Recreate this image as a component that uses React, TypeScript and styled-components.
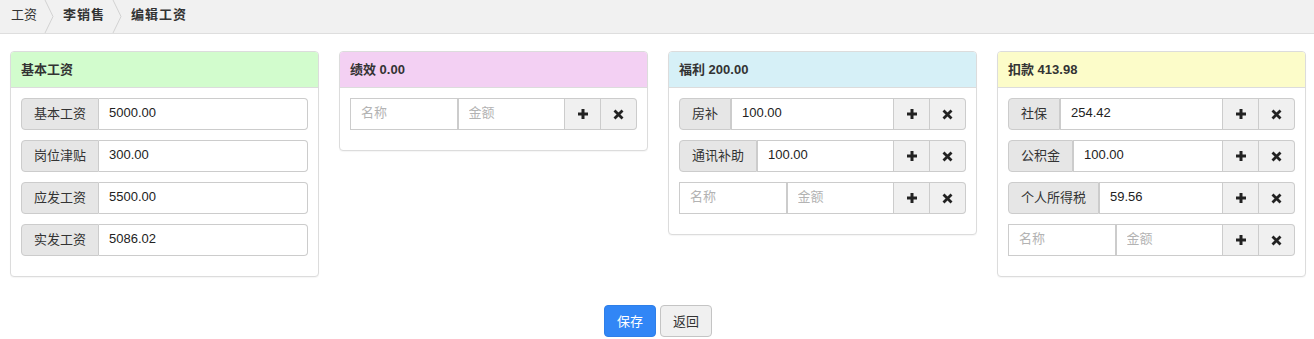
import React from "react";
import styled, { createGlobalStyle } from "styled-components";

const Global = createGlobalStyle`
  html, body { margin: 0; padding: 0; background: #fff; }
  body {
    font-family: "Liberation Sans", Arial, "Noto Sans CJK SC", sans-serif;
    font-size: 13px;
    color: #333;
  }
  * { box-sizing: border-box; }
`;

const Crumbs = styled.nav`
  display: flex;
  align-items: stretch;
  height: 34px;
  background: #f1f1f1;
  border-bottom: 1px solid #dedede;
  padding-left: 11px;
`;

const Crumb = styled.span<{ $bold?: boolean }>`
  display: flex;
  align-items: center;
  font-weight: ${(p) => (p.$bold ? "bold" : "normal")};
  letter-spacing: ${(p) => (p.$bold ? "1px" : "0")};
  color: #333;
  line-height: 18px;
  padding-bottom: 3px;
`;

const Sep = styled.svg`
  display: block;
  width: 10px;
  height: 33px;
  margin: 0 9px 0 7px;
`;

const Chevron = () => (
  <Sep viewBox="0 0 10 33">
    <polyline points="1,0 9,16.5 1,33" fill="none" stroke="#d2d2d2" strokeWidth="1" />
  </Sep>
);

const Grid = styled.div`
  display: grid;
  grid-template-columns: repeat(4, minmax(0, 1fr));
  column-gap: 20px;
  align-items: start;
  padding: 0 8px 0 10px;
  margin-top: 17px;
`;

const Panel = styled.section`
  border: 1px solid #dcdcdc;
  border-radius: 4px;
  background: #fff;
  box-shadow: 0 1px 1px rgba(0, 0, 0, 0.04);
  min-width: 0;
`;

const Heading = styled.div<{ $bg: string }>`
  background: ${(p) => p.$bg};
  border-bottom: 1px solid #dcdcdc;
  border-radius: 3px 3px 0 0;
  height: 36px;
  padding: 0 10px 2px;
  display: flex;
  align-items: center;
  font-weight: bold;
  font-size: 13px;
  color: #333;
`;

const Body = styled.div`
  padding: 10px 10px 10px;
  display: flex;
  flex-direction: column;
`;

const Group = styled.div`
  display: flex;
  height: 32px;
  margin-bottom: 10px;
`;

const Addon = styled.span`
  display: flex;
  align-items: center;
  padding: 0 12px 3px;
  background: #e6e6e6;
  border: 1px solid #ccc;
  border-radius: 4px 0 0 4px;
  color: #333;
  white-space: nowrap;
`;

const Field = styled.input<{ $last?: boolean }>`
  flex: 1 1 0;
  width: 0;
  min-width: 0;
  height: 32px;
  padding: 0 10px 3px;
  font: inherit;
  font-size: 13px;
  color: #222;
  border: 1px solid #ccc;
  border-left-width: ${(p) => (p.$last ? "0" : "1px")};
  border-radius: ${(p) => (p.$last ? "0 4px 4px 0" : "0")};
  outline: none;
  background: #fff;
  &::placeholder { color: #b3b3b3; }
`;

const IconBtn = styled.button<{ $end?: boolean }>`
  width: 36px;
  flex: none;
  display: flex;
  align-items: center;
  justify-content: center;
  padding: 0;
  background: #f0f0f0;
  border: 1px solid #ccc;
  border-left-width: 0;
  border-radius: ${(p) => (p.$end ? "0 4px 4px 0" : "0")};
  cursor: pointer;
`;

const PlusIcon = () => (
  <svg width="12" height="12" viewBox="0 0 12 12">
    <path d="M6 1v10M1 6h10" stroke="#222" strokeWidth="3" />
  </svg>
);

const XIcon = () => (
  <svg width="11" height="11" viewBox="0 0 11 11">
    <path d="M1.5 1.5l8 8M9.5 1.5l-8 8" stroke="#222" strokeWidth="2.8" />
  </svg>
);

const Footer = styled.div`
  display: flex;
  justify-content: center;
  gap: 4px;
  margin-top: 28px;
  padding-left: 2px;
`;

const Btn = styled.button<{ $primary?: boolean }>`
  height: 32px;
  padding: 0 12px 2px;
  font: inherit;
  font-size: 13px;
  border-radius: 4px;
  border: 1px solid ${(p) => (p.$primary ? "#2e7fe8" : "#c4c4c4")};
  background: ${(p) => (p.$primary ? "#3186f6" : "#f0f0f0")};
  color: ${(p) => (p.$primary ? "#fff" : "#333")};
  cursor: pointer;
`;

type Item = { name: string; value: string };

const Actions = () => (
  <>
    <IconBtn><PlusIcon /></IconBtn>
    <IconBtn $end><XIcon /></IconBtn>
  </>
);

const ItemRow = ({ item, editable }: { item: Item; editable: boolean }) => (
  <Group>
    <Addon>{item.name}</Addon>
    {editable ? (
      <>
        <Field defaultValue={item.value} />
        <Actions />
      </>
    ) : (
      <Field $last defaultValue={item.value} />
    )}
  </Group>
);

const NewRow = () => (
  <Group>
    <Field placeholder="名称" />
    <Field placeholder="金额" />
    <Actions />
  </Group>
);

const panels: { title: string; bg: string; items: Item[]; editable: boolean }[] = [
  {
    title: "基本工资",
    bg: "#d2fccd",
    editable: false,
    items: [
      { name: "基本工资", value: "5000.00" },
      { name: "岗位津贴", value: "300.00" },
      { name: "应发工资", value: "5500.00" },
      { name: "实发工资", value: "5086.02" },
    ],
  },
  { title: "绩效 0.00", bg: "#f3d0f3", editable: true, items: [] },
  {
    title: "福利 200.00",
    bg: "#d6f0f7",
    editable: true,
    items: [
      { name: "房补", value: "100.00" },
      { name: "通讯补助", value: "100.00" },
    ],
  },
  {
    title: "扣款 413.98",
    bg: "#fcfcc9",
    editable: true,
    items: [
      { name: "社保", value: "254.42" },
      { name: "公积金", value: "100.00" },
      { name: "个人所得税", value: "59.56" },
    ],
  },
];

export default function App() {
  return (
    <>
      <Global />
      <Crumbs>
        <Crumb>工资</Crumb>
        <Chevron />
        <Crumb $bold>李销售</Crumb>
        <Chevron />
        <Crumb $bold>编辑工资</Crumb>
      </Crumbs>
      <Grid>
        {panels.map((p) => (
          <Panel key={p.title}>
            <Heading $bg={p.bg}>{p.title}</Heading>
            <Body>
              {p.items.map((it) => (
                <ItemRow key={it.name} item={it} editable={p.editable} />
              ))}
              {p.editable && <NewRow />}
            </Body>
          </Panel>
        ))}
      </Grid>
      <Footer>
        <Btn $primary>保存</Btn>
        <Btn>返回</Btn>
      </Footer>
    </>
  );
}
